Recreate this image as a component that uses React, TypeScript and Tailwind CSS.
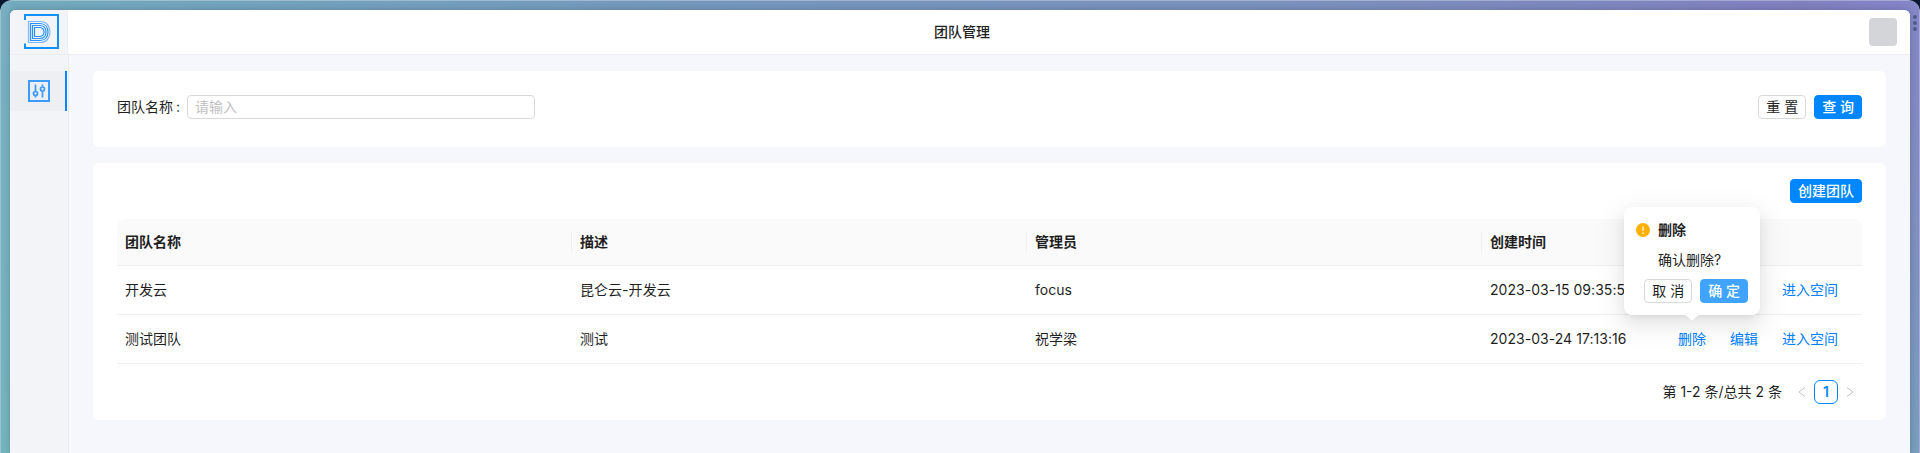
import type { ReactNode } from 'react';

function Logo() {
  return (
    <svg width="36" height="36" viewBox="0 0 36 36" fill="none">
      <path d="M1 6V1H34V34H1V29.5" stroke="#0f92ff" strokeWidth="2" />
      <g stroke="#2b92ff" strokeWidth="1.2">
        <path d="M4.500 7.500H16C22.500 7.500 26 12 26 18S22.500 28.500 16 28.500H4.500Z" stroke="#7cb7ff" />
        <path d="M6.500 9.500H16C21.500 9.500 24 13.500 24 18S21.500 26.500 16 26.500H6.500Z" />
        <path d="M8.500 11.500H15.500C20 11.500 22 14.500 22 18S20 24.500 15.500 24.500H8.500Z" />
        <path d="M10.500 13.500H15C18.500 13.500 20 15.500 20 18S18.500 22.500 15 22.500H10.500Z" />
      </g>
    </svg>
  );
}

function ControlIcon() {
  return (
    <svg width="22" height="22" viewBox="0 0 22 22" fill="none" stroke="#3d9bff">
      <rect x="1" y="1" width="20" height="20" strokeWidth="2" />
      <path d="M7.500 4.500V11M7.500 16V17.500M14.500 4.500V6.500M14.500 11.500V17.500" strokeWidth="1.700" />
      <circle cx="7.500" cy="13.500" r="2" strokeWidth="1.700" />
      <circle cx="14.500" cy="9" r="2" strokeWidth="1.700" />
    </svg>
  );
}

function Button({ primary, soft, children }: { primary?: boolean; soft?: boolean; children: ReactNode }) {
  const tone = soft
    ? 'bg-[#40a4ff] border-[#40a4ff] text-white font-medium'
    : primary
      ? 'bg-[#0087ff] border-[#0087ff] text-white font-medium'
      : 'bg-white border-[#d9d9d9] text-[#1f1f1f]';
  return (
    <button className={`flex h-6 items-center justify-center whitespace-pre rounded-[4px] border px-[7px] leading-none ${tone}`}>
      {children}
    </button>
  );
}

const columns = ['团队名称', '描述', '管理员', '创建时间', ''];
const rows = [
  ['开发云', '昆仑云-开发云', 'focus', '2023-03-15 09:35:5'],
  ['测试团队', '测试', '祝学梁', '2023-03-24 17:13:16'],
];
const gridCols = 'grid grid-cols-[455px_455px_455px_188px_192px] items-center';

function Popconfirm() {
  return (
    <div className="absolute -left-[46px] bottom-[34px] z-10 h-[108px] w-[136px] rounded-lg bg-white px-3 pt-3 text-[#1f1f1f] shadow-[0_6px_16px_0_rgba(0,0,0,0.08),0_3px_6px_-4px_rgba(0,0,0,0.12),0_9px_28px_8px_rgba(0,0,0,0.05)]">
      <div className="flex h-[22px] items-center gap-2 font-semibold">
        <svg width="14" height="14" viewBox="0 0 14 14">
          <circle cx="7" cy="7" r="7" fill="#ffb000" />
          <path d="M7 3.200V8" stroke="#fff" strokeWidth="1.200" />
          <circle cx="7" cy="10.100" r="0.800" fill="#fff" />
        </svg>
        删除
      </div>
      <div className="mt-2 flex h-[22px] items-center pl-[22px]">确认删除?</div>
      <div className="mt-2 flex justify-end gap-2">
        <Button>取 消</Button>
        <Button soft>确 定</Button>
      </div>
      <svg className="absolute left-[60px] top-[107px]" width="16" height="7" viewBox="0 0 16 7">
        <path d="M0 1C2 1 3 2 4 3L7 5.700Q8 6.500 9 5.700L12 3C13 2 14 1 16 1V0H0Z" fill="#fff" />
      </svg>
    </div>
  );
}

export default function App() {
  return (
    <div className="h-[453px] w-[1920px] overflow-hidden bg-[#0a1730] font-['Inter','Noto_Sans_CJK_SC',sans-serif] text-sm text-[#1f1f1f]">
      <div className="relative h-full rounded-t-xl border-x border-t border-white/30 bg-[linear-gradient(90deg,#72aabd_0%,#7598bd_35%,#7b8fbd_70%,#8080bf_94%,#8586ca_100%)] bg-origin-border px-[9px] pt-[9px]">
        <div className="absolute left-0 top-0 h-full w-[9px] rounded-tl-xl bg-[linear-gradient(180deg,#78aec1,#75b4bd)]" />
        <div className="absolute right-0 top-0 h-full w-[9px] rounded-tr-xl bg-[linear-gradient(180deg,#8486c6_0%,#7f8fc0_50%,#779ebd_100%)]" />
        <div className="absolute right-[2px] top-[14px] flex flex-col gap-[2px]">
          <i className="size-1 rounded-full bg-[#535c8c]" />
          <i className="size-1 rounded-full bg-[#535c8c]" />
          <i className="size-1 rounded-full bg-[#535c8c]" />
        </div>
        <div className="relative flex h-full flex-col overflow-hidden rounded-t-[6px] bg-[#f5f7fc] shadow-[0_0_6px_rgba(0,0,0,0.2)]">
          <header className="flex h-[45px] shrink-0 border-b border-[#ebedf1] bg-white">
            <div className="flex h-full w-[58px] shrink-0 border-r border-[#eceef0] bg-[#f3f4f7] pl-[14px] pt-1">
              <Logo />
            </div>
            <div className="flex flex-1 items-center justify-end pr-[13px]">
              <div className="flex-1 pl-[866px] font-medium">团队管理</div>
              <div className="size-7 rounded-[4px] bg-[#d4d5d9]" />
            </div>
          </header>
          <div className="flex flex-1">
            <aside className="w-[59px] shrink-0 border-r border-[#eaecef] bg-[#f3f4f7] pt-4">
              <div className="flex h-10 w-[57px] items-center rounded-l-[4px] border-r-2 border-[#0087ff] bg-[#edeff3] pl-[18px]">
                <ControlIcon />
              </div>
            </aside>
            <main className="flex flex-1 flex-col gap-4 pl-6 pr-6 pt-4">
              <section className="flex h-[76px] items-start justify-between rounded-md bg-white p-6">
                <div className="flex h-6 items-center">
                  <label className="w-[70px] whitespace-nowrap">团队名称<span className="ml-[3px]">:</span></label>
                  <input
                    placeholder="请输入"
                    className="h-6 w-[348px] rounded-[4px] border border-[#d9d9d9] px-[7px] pb-px placeholder:text-[#bfbfbf]"
                  />
                </div>
                <div className="flex gap-2">
                  <Button>重 置</Button>
                  <Button primary>查 询</Button>
                </div>
              </section>
              <section className="h-[257px] rounded-md bg-white px-6 pt-4">
                <div className="flex justify-end">
                  <Button primary>创建团队</Button>
                </div>
                <div className={`mt-4 h-[47px] rounded-t-lg border-b border-[#f0f0f0] bg-[#fafafa] font-semibold ${gridCols}`}>
                  {columns.map((c, i) => (
                    <div key={i} className={`flex h-[22px] items-center px-2 ${i < 4 ? 'border-r border-[#f0f0f0]' : ''}`}>
                      {c}
                    </div>
                  ))}
                </div>
                {rows.map((r, i) => (
                  <div key={i} className={`h-[49px] border-b border-[#f0f0f0] ${gridCols}`}>
                    {r.map((c) => (
                      <div key={c} className="whitespace-nowrap px-2 tracking-[0.04px]">{c}</div>
                    ))}
                    <div className="relative flex justify-end gap-6 pl-2 pr-6 text-[#0080ff]">
                      {i === 1 && <a>删除</a>}
                      {i === 1 && <a>编辑</a>}
                      <a>进入空间</a>
                      {i === 1 && <Popconfirm />}
                    </div>
                  </div>
                ))}
                <div className="mt-4 flex h-6 items-center justify-end">
                  <span className="mr-2">第 1-2 条/总共 2 条</span>
                  <span className="flex w-6 justify-center">
                    <svg width="8" height="12" viewBox="0 0 8 12" fill="none" stroke="#bfbfbf"><path d="M7 1.500L1 6L7 10.500" /></svg>
                  </span>
                  <span className="flex size-6 items-center justify-center rounded-md border border-[#0087ff] font-semibold text-[#0087ff]">1</span>
                  <span className="flex w-6 justify-center">
                    <svg width="8" height="12" viewBox="0 0 8 12" fill="none" stroke="#bfbfbf"><path d="M1 1.500L7 6L1 10.500" /></svg>
                  </span>
                </div>
              </section>
            </main>
          </div>
        </div>
      </div>
    </div>
  );
}
